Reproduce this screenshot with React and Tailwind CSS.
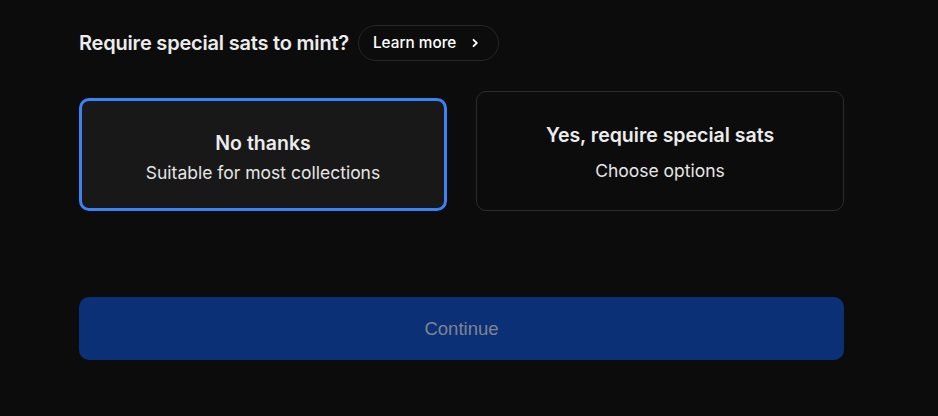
import React from "react";

export default function App() {
    const [choice, setChoice] = React.useState("no");

    return (
        <div className="min-h-[416px] w-full bg-[#0c0c0c] font-['Inter',sans-serif] text-white">
            <div className="ml-[79px] w-[765px] pt-[25px]">
                {/* Heading + learn more */}
                <div className="flex items-center gap-[9px]">
                    <h2 className="text-[20px] font-semibold tracking-[-0.01em] text-[#ececec]">Require special sats to mint?</h2>
                    <button className="flex h-[36px] items-center gap-[14px] rounded-full border border-[#262626] pl-[14px] pr-[18px] text-[15.3px] font-medium text-white">
                        Learn more
                        <svg width="10" height="10" viewBox="0 0 10 10" fill="none">
                            <path d="M3.5 1.8 L6.8 5 L3.5 8.2" stroke="white" strokeWidth="1.8" strokeLinecap="round" strokeLinejoin="round" />
                        </svg>
                    </button>
                </div>

                {/* Options */}
                <div className="mt-[30px] flex items-end gap-[29px]">
                    <button
                        onClick={() => setChoice("no")}
                        className="flex h-[113px] w-[368px] flex-col items-center justify-center rounded-[10px] border-[3px] border-[#3b82f6] bg-[#181818] pt-[6px]"
                    >
                        <span className="text-[19.5px] font-semibold text-[#ececec]">No thanks</span>
                        <span className="mt-[1px] text-[17.5px] text-[#e6e6e6]">Suitable for most collections</span>
                    </button>
                    <button
                        onClick={() => setChoice("yes")}
                        className="flex h-[120px] w-[368px] flex-col items-center justify-center rounded-[10px] border border-[#2c2c2c] bg-[#0c0c0c] pt-[3px]"
                    >
                        <span className="text-[19.5px] font-semibold text-[#ececec]">Yes, require special sats</span>
                        <span className="mt-[8px] text-[17.5px] text-[#e6e6e6]">Choose options</span>
                    </button>
                </div>

                {/* Continue */}
                <button className="mt-[86px] flex h-[63px] w-full items-center justify-center rounded-[10px] bg-[#0c3075] font-['Liberation_Sans',sans-serif] text-[18.5px] text-[#7f8592]">
                    Continue
                </button>
            </div>
        </div>
    );
}
